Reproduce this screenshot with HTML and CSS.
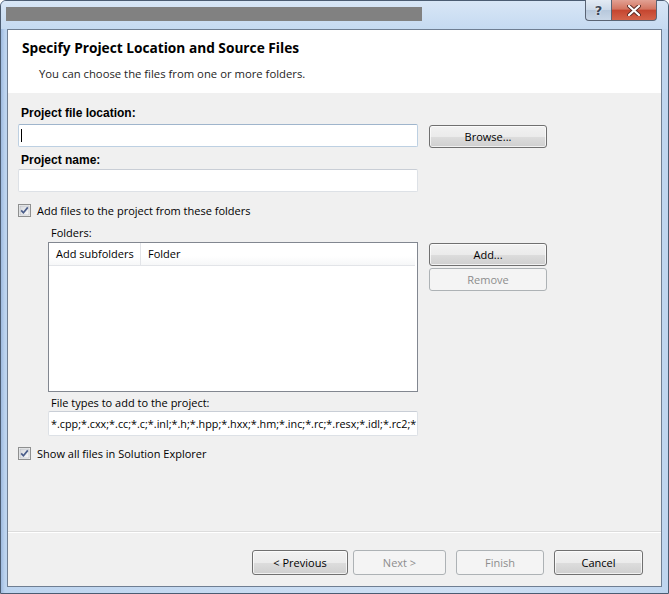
FILE: index.html
```html
<!DOCTYPE html>
<html>
<head>
<meta charset="utf-8">
<link rel="stylesheet" href="styles.css">
</head>
<body>
<div class="window">
  <div class="titlebar">
    <div class="title-redacted"></div>
    <div class="caption">
      <div class="cap-btn cap-help">?</div>
      <div class="cap-btn cap-close">
        <svg width="14" height="11" viewBox="0 0 14 11"><path d="M2 1 L12 10 M12 1 L2 10" stroke="#5a2a24" stroke-width="4" stroke-linecap="round"/><path d="M2 1 L12 10 M12 1 L2 10" stroke="#ffffff" stroke-width="2.2" stroke-linecap="round"/></svg>
      </div>
    </div>
  </div>
  <div class="client">
    <div class="header">
      <div class="h-title">Specify Project Location and Source Files</div>
      <div class="h-sub">You can choose the files from one or more folders.</div>
    </div>
    <div class="body">
      <div class="label-bold l1">Project file location:</div>
      <div class="row">
        <div class="input input-focus"><span class="caret"></span></div>
        <div class="btn btn-side">Browse...</div>
      </div>
      <div class="label-bold l2">Project name:</div>
      <div class="row">
        <div class="input"></div>
      </div>
      <div class="check c1">
        <svg class="cb" width="13" height="13" viewBox="0 0 13 13"><defs><linearGradient id="g1" x1="0" y1="0" x2="1" y2="1"><stop offset="0" stop-color="#d6d8dc"/><stop offset="1" stop-color="#fbfbfb"/></linearGradient></defs><rect x="0.5" y="0.5" width="12" height="12" fill="#f4f4f4" stroke="#8e8f8f"/><rect x="2" y="2" width="9" height="9" fill="url(#g1)" stroke="#b4b9c0" stroke-width="0.6"/><path d="M3.2 6.4 L5.4 8.8 L9.8 3.4" fill="none" stroke="#4a5d8a" stroke-width="1.7"/></svg>
        <span>Add files to the project from these folders</span>
      </div>
      <div class="indent">
        <div class="label l3">Folders:</div>
        <div class="row list-row">
          <div class="listbox">
            <div class="lb-head">
              <div class="col col1">Add subfolders</div>
              <div class="col">Folder</div>
            </div>
          </div>
          <div class="btn-col">
            <div class="btn btn-side">Add...</div>
            <div class="btn btn-side disabled">Remove</div>
          </div>
        </div>
        <div class="label l4">File types to add to the project:</div>
        <div class="input types">*.cpp;*.cxx;*.cc;*.c;*.inl;*.h;*.hpp;*.hxx;*.hm;*.inc;*.rc;*.resx;*.idl;*.rc2;*</div>
      </div>
      <div class="check c2">
        <svg class="cb" width="13" height="13" viewBox="0 0 13 13"><defs><linearGradient id="g2" x1="0" y1="0" x2="1" y2="1"><stop offset="0" stop-color="#d6d8dc"/><stop offset="1" stop-color="#fbfbfb"/></linearGradient></defs><rect x="0.5" y="0.5" width="12" height="12" fill="#f4f4f4" stroke="#8e8f8f"/><rect x="2" y="2" width="9" height="9" fill="url(#g2)" stroke="#b4b9c0" stroke-width="0.6"/><path d="M3.2 6.4 L5.4 8.8 L9.8 3.4" fill="none" stroke="#4a5d8a" stroke-width="1.7"/></svg>
        <span>Show all files in Solution Explorer</span>
      </div>
    </div>
    <div class="footer">
      <div class="btn b-prev">&lt; Previous</div>
      <div class="btn b-next disabled">Next &gt;</div>
      <div class="btn b-finish disabled">Finish</div>
      <div class="btn b-cancel">Cancel</div>
    </div>
  </div>
</div>
</body>
</html>
```

FILE: styles.css
```css
html, body {
  margin: 0;
  padding: 0;
  background: #ffffff;
}
body {
  font-family: "Open Sans", "Noto Sans", sans-serif;
  font-size: 11px;
  color: #000;
}
.window {
  box-sizing: border-box;
  width: 669px;
  height: 594px;
  border: 1px solid #4b5c72;
  border-radius: 6px 6px 0 0;
  background: linear-gradient(90deg, #9fbbe0 0px, #bdd4ef 4px, #c9dcf2 40%, #cfe0f4 70%, #bfd5ef 100%);
  display: flex;
  flex-direction: column;
}
.titlebar {
  height: 28px;
  flex: none;
  display: flex;
  align-items: flex-start;
  padding-left: 5px;
  padding-right: 11px;
  background: linear-gradient(180deg, #d8e6f6 0%, #c5daf1 100%);
  border-radius: 5px 5px 0 0;
}
.title-redacted {
  width: 416px;
  height: 14px;
  margin-top: 6px;
  background: #818181;
}
.caption {
  margin-left: auto;
  display: flex;
  margin-top: -1px;
}
.cap-btn {
  box-sizing: border-box;
  height: 21px;
  border: 1px solid #5a6474;
  border-top: none;
  display: flex;
  align-items: center;
  justify-content: center;
}
.cap-help {
  width: 26px;
  border-radius: 0 0 0 4px;
  background: linear-gradient(180deg, #e3ebf4 0%, #ccd9e8 50%, #b7c8dc 51%, #c9d7e7 100%);
  color: #3b4656;
  font-family: "DejaVu Sans", sans-serif;
  font-size: 13px;
  font-weight: bold;
  text-shadow: 0 0 2px #fff;
  border-right: none;
}
.cap-close {
  width: 46px;
  border-radius: 0 0 4px 0;
  background: linear-gradient(180deg, #e2a193 0%, #d37561 45%, #c54630 52%, #d4634a 100%);
}
.client {
  flex: 1;
  margin: 0 6px 6px 6px;
  border: 1px solid #6f7e92;
  background: #f0f0f0;
  display: flex;
  flex-direction: column;
}
.header {
  height: 63px;
  flex: none;
  background: #ffffff;
  box-sizing: border-box;
  padding-top: 9px;
}
.h-title {
  padding-left: 14px;
  font-weight: bold;
  font-size: 13.7px;
  line-height: 18px;
}
.h-sub {
  padding-left: 31px;
  margin-top: 9px;
  font-size: 11.3px;
  line-height: 15px;
  color: #1e1e1e;
}
.body {
  flex: 1;
  padding: 13px 0 0 10px;
}
.label-bold {
  font-family: "Liberation Sans", Arial, sans-serif;
  font-weight: bold;
  font-size: 12px;
  line-height: 15px;
  padding-left: 3px;
}
.l1 { margin-bottom: 3px; }
.l2 { margin-top: 5px; margin-bottom: 1px; }
.row {
  display: flex;
  align-items: flex-start;
}
.input {
  box-sizing: border-box;
  width: 400px;
  height: 23px;
  background: #ffffff;
  border: 1px solid #dde1e6;
  border-top-color: #c9ced6;
  border-radius: 2px;
  position: relative;
}
.input-focus {
  border-color: #bdd0e2;
  border-top-color: #9fb5cc;
}
.caret {
  position: absolute;
  left: 2px;
  top: 4px;
  width: 1px;
  height: 13px;
  background: #000;
}
.btn {
  box-sizing: border-box;
  height: 23px;
  border: 1px solid #707070;
  border-radius: 3px;
  background: linear-gradient(180deg, #f2f2f2 0%, #ebebeb 50%, #dddddd 51%, #cfcfcf 100%);
  box-shadow: inset 0 0 0 1px rgba(255,255,255,0.7);
  display: flex;
  align-items: center;
  justify-content: center;
  line-height: 15px;
  color: #000;
}
.btn.disabled {
  border-color: #adb2b5;
  background: #f4f4f4;
  box-shadow: none;
  color: #8d8d8d;
}
.btn-side {
  width: 118px;
}
.row > .btn-side {
  margin-left: 11px;
  margin-top: 1px;
}
.check {
  display: flex;
  align-items: center;
  height: 15px;
  line-height: 15px;
}
.check .cb {
  flex: none;
  margin-right: 6px;
}
.c1 { margin-top: 11px; }
.c2 { margin-top: 10px; }
.indent {
  padding-left: 30px;
}
.label {
  line-height: 15px;
  padding-left: 3px;
}
.l3 { margin-top: 7px; margin-bottom: 2px; }
.l4 { margin-top: 3px; margin-bottom: 1px; }
.listbox {
  box-sizing: border-box;
  width: 370px;
  height: 150px;
  border: 1px solid #828790;
  background: #ffffff;
}
.lb-head {
  display: flex;
  height: 23px;
  box-sizing: border-box;
  border-bottom: 1px solid #e2e4e8;
  background: linear-gradient(180deg, #ffffff 0%, #ffffff 60%, #f6f7f8 100%);
  margin-right: 2px;
}
.col {
  line-height: 22px;
  padding-left: 7px;
}
.col1 {
  width: 92px;
  box-sizing: border-box;
  border-right: 1px solid #e2e4e8;
  padding-left: 7px;
}
.btn-col {
  margin-left: 11px;
  margin-top: 1px;
  display: flex;
  flex-direction: column;
  gap: 2px;
}
.types {
  width: 370px;
  height: 25px;
  line-height: 23px;
  padding-left: 2px;
  font-size: 10.8px;
  white-space: nowrap;
  overflow: hidden;
  color: #000;
}
.footer {
  flex: none;
  height: 55px;
  box-sizing: border-box;
  border-top: 1px solid #dcdcdc;
  box-shadow: inset 0 1px 0 #ffffff;
  display: flex;
  align-items: flex-start;
  justify-content: flex-end;
  padding-top: 18px;
  padding-right: 18px;
}
.footer .btn {
  height: 25px;
}
.b-prev { width: 96px; }
.b-next { width: 93px; margin-left: 5px; }
.b-finish { width: 88px; margin-left: 10px; }
.b-cancel { width: 89px; margin-left: 10px; }
```
